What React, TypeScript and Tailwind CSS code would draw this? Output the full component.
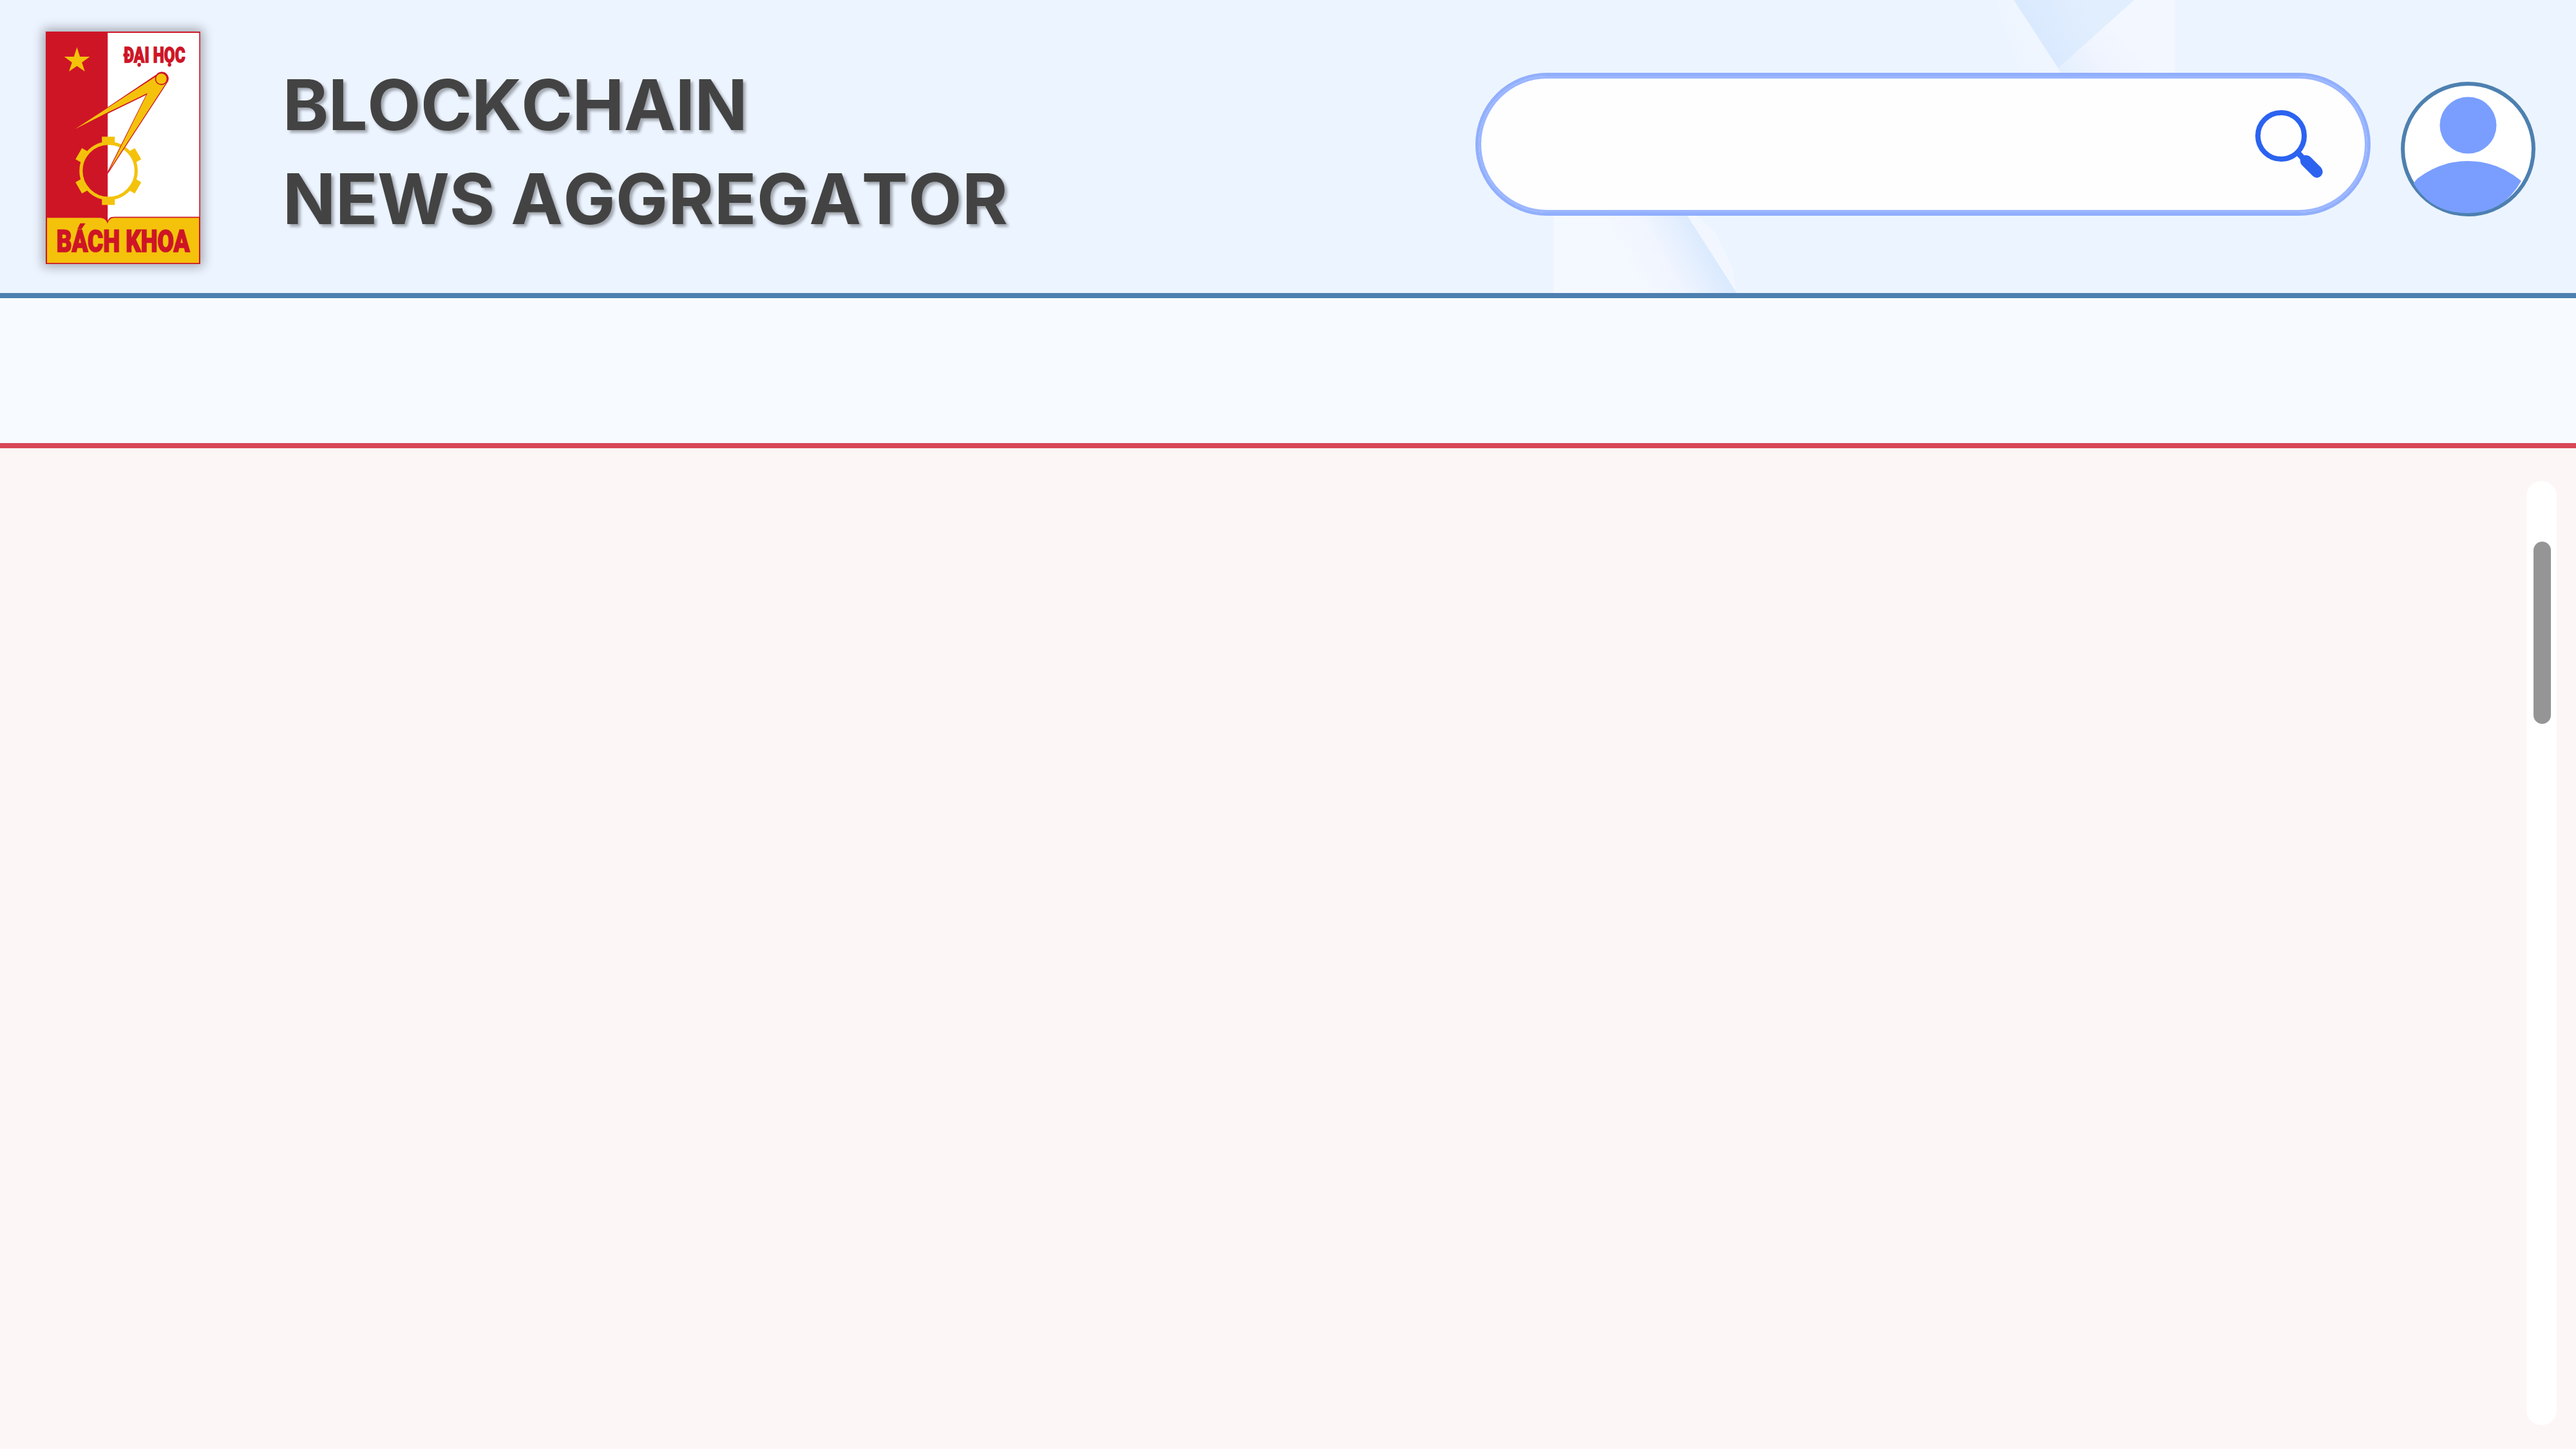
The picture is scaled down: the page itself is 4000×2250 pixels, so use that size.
const TOOTH_ANGLES = [0, 60, 120, 180, 240, 300];

function UniversityLogo() {
  return (
    <svg
      viewBox="94 87 718 1082"
      preserveAspectRatio="none"
      className="h-[361px] w-[240px] shrink-0 overflow-visible shadow-[0_0_16px_4px_rgba(0,0,0,0.32)]"
    >
      <rect x="94" y="87" width="718" height="1082" fill="#ce1526" />
      <rect x="382" y="93" width="425" height="856" fill="#fff" />
      <path d="M100 954H345C365 954 378 966 381 982C384 966 395 954 412 954H806V1164H100Z" fill="#f4c20b" />
      <path d="M382 940V968C388 955 396 949 412 949V940Z" fill="#fff" />
      <polygon
        points="239,160 253,204 299,204 262,231 276,273 239,247 202,273 216,231 180,204 225,204"
        fill="#f4c20b"
      />
      <g fill="#f4c20b">
        <circle cx="386" cy="735" r="128" fill="none" stroke="#f4c20b" strokeWidth="15" />
        {TOOTH_ANGLES.map((angle) => (
          <path key={angle} d="M355 576H415V606Q386 596 355 606Z" transform={`rotate(${angle} 385 735)`} />
        ))}
      </g>
      <path d="M230 541L609 286A30 30 0 0 1 658 326L382 750V738L560 382L382 469Z" fill="#ce1526" />
      <path d="M230 541L612 292A26 26 0 0 1 652 328L388 734L567 373L382 463Z" fill="#f4c20b" />
      <circle cx="631" cy="307" r="27" fill="#f4c20b" stroke="#ce1526" strokeWidth="5" />
      <text
        x="456"
        y="230"
        textLength="286"
        lengthAdjust="spacingAndGlyphs"
        fill="#ce1526"
        stroke="#ce1526"
        strokeWidth="4"
        fontSize="97"
        className="font-['Roboto',sans-serif] font-black"
      >
        ĐẠI HỌC
      </text>
      <text
        x="144"
        y="1111"
        textLength="619"
        lengthAdjust="spacingAndGlyphs"
        fill="#ce1526"
        stroke="#ce1526"
        strokeWidth="5"
        fontSize="144"
        className="font-['Roboto',sans-serif] font-black"
      >
        BÁCH KHOA
      </text>
    </svg>
  );
}

function HeaderArtwork() {
  return (
    <svg viewBox="2380 0 1040 455" className="absolute top-0 left-[2380px] h-[455px] w-[1040px]">
      <defs>
        <linearGradient id="facet" gradientUnits="userSpaceOnUse" x1="3150" y1="60" x2="3240" y2="10">
          <stop offset="0" stopColor="#d9e9fe" />
          <stop offset="1" stopColor="#e1eefe" />
        </linearGradient>
        <linearGradient id="facetRight" gradientUnits="userSpaceOnUse" x1="3200" y1="113" x2="3290" y2="45">
          <stop offset="0" stopColor="#e3effe" />
          <stop offset="0.5" stopColor="#eff4fe" />
          <stop offset="1" stopColor="#f3f7ff" />
        </linearGradient>
        <linearGradient id="facetStrip" gradientUnits="userSpaceOnUse" x1="3090" y1="60" x2="3150" y2="35">
          <stop offset="0" stopColor="#ecf4ff" />
          <stop offset="1" stopColor="#f0f6ff" />
        </linearGradient>
        <linearGradient id="facetLow" gradientUnits="userSpaceOnUse" x1="2550" y1="450" x2="2657" y2="393">
          <stop offset="0" stopColor="#f4f8ff" />
          <stop offset="0.45" stopColor="#f0f5ff" />
          <stop offset="1" stopColor="#dbeafe" />
        </linearGradient>
      </defs>
      <path d="M3100 0H3127L3200 113H3138Q3115 60 3100 0Z" fill="url(#facetStrip)" />
      <path d="M3127 0H3314L3196 106Z" fill="url(#facet)" />
      <path d="M3314 0H3377V113H3200L3196 106Z" fill="url(#facetRight)" />
      <path d="M2412 330H2617L2697 455H2412Z" fill="url(#facetLow)" />
      <path d="M2617 330H2630L2663 360L2690 415L2697 455Z" fill="#f2f7ff" />
    </svg>
  );
}

function SearchIcon() {
  return (
    <svg viewBox="3502 171 106 106" className="h-[106px] w-[106px]">
      <circle cx="3542" cy="211" r="36" fill="none" stroke="#2b63f0" strokeWidth="8" />
      <path d="M3568 237L3580 250" stroke="#2b63f0" strokeWidth="9" />
      <path d="M3572 246Q3573 241 3580 241Q3585 241 3588 244L3604 260Q3608 265 3606 270Q3603 276 3597 276Q3594 276 3591 273L3574 256Q3571 252 3572 246Z" fill="#2b63f0" />
    </svg>
  );
}

function Avatar() {
  return (
    <svg viewBox="3728 127 209 209" className="mt-[14px] ml-[47px] h-[209px] w-[209px] shrink-0">
      <circle cx="3832.5" cy="231.5" r="101.5" fill="#fff" stroke="#4d80b0" strokeWidth="6" />
      <circle cx="3832.5" cy="194.5" r="44" fill="#799eff" />
      <path d="M3748 285Q3750 281 3754 277Q3790 250 3832 250Q3878 250 3915 281Q3887 331 3832 331Q3775 331 3748 285Z" fill="#799eff" />
    </svg>
  );
}

export default function App() {
  return (
    <div className="flex h-[2250px] w-[4000px] flex-col overflow-hidden bg-[#fdf6f6]">
      <header className="relative h-[463px] shrink-0 border-b-8 border-[#4d80b0] bg-[#ecf4ff]">
        <HeaderArtwork />
        <div className="relative flex items-start pt-[49px] pl-[71px]">
          <UniversityLogo />
          <h1 className="mt-[41px] ml-[128px] w-[1400px] font-['Inter',sans-serif] text-[108px] leading-[146px] font-bold whitespace-nowrap text-[#434343] [font-kerning:none] [text-shadow:4px_4px_4px_rgba(0,0,0,0.32)]">
            <span className="tracking-[-0.6px]">BLOCKCHAIN</span>
            <br />
            <span className="tracking-[-0.4px]">NEWS </span>
            <span className="tracking-[0.5px]">AGGREGATOR</span>
          </h1>
          <div className="mt-[64px] ml-[452px] flex shrink-0">
            <div className="h-[222px] w-[1390px] rounded-full border-[5px] border-[#91affd]">
              <div className="flex h-full items-start justify-end rounded-full border-4 border-[#9bb6ff] bg-[#fefeff] pt-[49px] pr-[64px]">
                <SearchIcon />
              </div>
            </div>
            <Avatar />
          </div>
        </div>
      </header>
      <nav className="h-[233px] shrink-0 border-b-8 border-[#d84756] bg-[#f7fbff]" />
      <main className="flex grow justify-end pt-[51px] pr-[30px] pb-[37px]">
        <div className="w-[47px] rounded-full bg-white pt-[94px] pl-[11px]">
          <div className="h-[283px] w-[27px] rounded-full bg-[#959595]" />
        </div>
      </main>
    </div>
  );
}
